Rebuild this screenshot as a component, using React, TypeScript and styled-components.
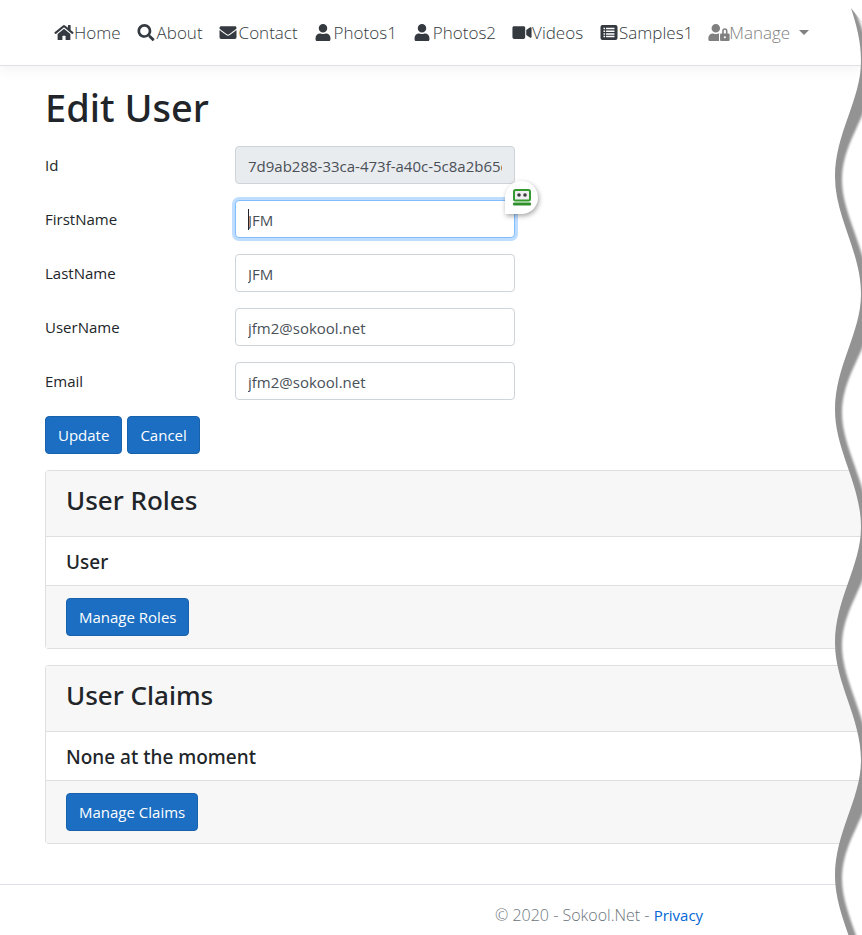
import React from 'react';
import styled, { createGlobalStyle, css } from 'styled-components';
import {
  FaHome,
  FaSearch,
  FaEnvelope,
  FaUser,
  FaVideo,
  FaUserLock,
} from 'react-icons/fa';

const GlobalStyle = createGlobalStyle`
  *, *::before, *::after { box-sizing: border-box; }
  body {
    margin: 0;
    background: #fff;
    color: #212529;
    font-family: 'Segoe UI', 'Open Sans', 'Noto Sans', sans-serif;
    font-size: 15px;
    line-height: 24px;
  }
`;

const headingFont = "'Segoe UI', 'Noto Sans', 'Open Sans', sans-serif";

const Page = styled.div`
  position: relative;
  overflow: hidden;
`;

const Navbar = styled.header`
  display: flex;
  align-items: center;
  height: 66px;
  padding-left: 53px;
  border-bottom: 1px solid #dee2e6;
  box-shadow: 0 4px 12px rgba(0, 0, 0, 0.05);
`;

const NavList = styled.nav`
  display: flex;
  align-items: center;
  gap: 15px;
`;

const NavLink = styled.a<{ $muted?: boolean }>`
  display: flex;
  align-items: center;
  color: ${(p) => (p.$muted ? '#808080' : '#343a40')};
  font-size: 17px;
  font-weight: 300;
  text-decoration: none;
  white-space: nowrap;
`;

const IconSlot = styled.span`
  display: flex;
  justify-content: center;
  width: 21px;

  svg {
    flex: none;
    width: 22px;
    height: 17px;
  }
`;

const Caret = styled.span`
  margin-left: 9px;
  border-top: 5px solid currentColor;
  border-left: 5px solid transparent;
  border-right: 5px solid transparent;
`;

const Main = styled.main`
  padding: 17px 0 0 45px;
`;

const Title = styled.h1`
  margin: 0 0 15px;
  font-family: ${headingFont};
  font-size: 38px;
  font-weight: 500;
  line-height: 48px;
`;

const FieldRow = styled.div`
  display: grid;
  grid-template-columns: 190px 280px;
  align-items: center;
  margin-bottom: 16px;
`;

const FieldLabel = styled.label`
  font-size: 15px;
`;

const FieldBox = styled.div`
  position: relative;
`;

const TextInput = styled.input<{ $active?: boolean }>`
  display: block;
  width: 100%;
  height: 38px;
  padding: 8px 12px 6px;
  border: 1px solid #ced4da;
  border-radius: 4px;
  background: #fff;
  color: #495057;
  font: inherit;
  outline: none;

  &:read-only { background: #e9ecef; }

  ${(p) =>
    p.$active &&
    css`
      border-color: #80bdff;
      box-shadow: 0 0 0 3px #bfdeff;
      caret-color: transparent;
    `}
`;

const TextCursor = styled.span`
  position: absolute;
  left: 13px;
  top: 9px;
  width: 1px;
  height: 21px;
  background: #212529;
`;

const FillBadge = styled.button`
  position: absolute;
  right: -23px;
  top: -19px;
  display: flex;
  align-items: center;
  justify-content: center;
  width: 33px;
  height: 33px;
  padding: 0;
  border: 0;
  border-radius: 17px 17px 17px 0;
  background: #fff;
  box-shadow: 1px 2px 5px rgba(0, 0, 0, 0.35);
`;

const ButtonRow = styled.div`
  display: flex;
  gap: 5px;
  margin-bottom: 16px;
`;

const Button = styled.button`
  height: 38px;
  padding: 0 12px;
  border: 1px solid #1861ac;
  border-radius: 4px;
  background: #1b6ec2;
  color: #fff;
  font: inherit;
`;

const Card = styled.section`
  margin-bottom: 16px;
  border: 1px solid #dfdfdf;
  border-right: 0;
  border-radius: 4px 0 0 4px;
`;

const CardHeader = styled.div`
  padding: 13px 20px 19px;
  border-bottom: 1px solid #dfdfdf;
  background: #f7f7f7;
`;

const CardTitle = styled.h2`
  margin: 0;
  font-family: ${headingFont};
  font-size: 26px;
  font-weight: 500;
  line-height: 33px;
`;

const CardText = styled.h3`
  margin: 0;
  padding: 13px 20px 11px;
  font-family: ${headingFont};
  font-size: 19px;
  font-weight: 500;
  line-height: 24px;
`;

const CardFooter = styled.div`
  padding: 12px 20px;
  border-top: 1px solid #dfdfdf;
  background: #f7f7f7;
`;

const Footer = styled.footer`
  margin-top: 40px;
  padding: 18px 0 8px 495px;
  border-top: 1px solid #dee2e6;
  color: #6c757d;
  font-size: 16px;
  font-weight: 300;
  white-space: nowrap;

  a {
    color: #0366d6;
    font-size: 15px;
    font-weight: 400;
    text-decoration: none;
  }
`;

const TornEdge = styled.svg`
  position: absolute;
  top: 0;
  right: 0;
  width: 30px;
  height: 935px;
  pointer-events: none;
`;

const WAVE = 233;
const WAVES = [0, 1, 2, 3];

const outerEdge =
  'M19 8 C24 24 29 40 29 61 ' +
  WAVES.map((n) => {
    const y = n * WAVE;
    return `C29 ${y + 100} 3 ${y + 133} 3 ${y + 177} C3 ${y + 217} 29 ${y + 252} 29 ${y + 294}`;
  }).join(' ') +
  ' H60 V24 L30 22 Z';

const innerEdge =
  'M22 8 C25 16 36 36 39 76 ' +
  WAVES.map((n) => {
    const y = n * WAVE;
    return `C39 ${y + 116} 10 ${y + 140} 10 ${y + 180} C10 ${y + 217} 39 ${y + 254} 39 ${y + 309}`;
  }).join(' ') +
  ' H80 V0 H22 Z';

function TornPaper() {
  return (
    <TornEdge viewBox="0 0 30 935" aria-hidden="true">
      <defs>
        <filter id="soft" x="-20%" y="-2%" width="140%" height="104%">
          <feGaussianBlur stdDeviation="1.2" />
        </filter>
        <clipPath id="sheet">
          <path d={outerEdge} />
        </clipPath>
      </defs>
      <path d={outerEdge} fill="#939393" />
      <g clipPath="url(#sheet)">
        <path d={innerEdge} fill="#fff" filter="url(#soft)" />
      </g>
    </TornEdge>
  );
}

function RobotIcon() {
  return (
    <svg width="18" height="17" viewBox="0 0 18 17" aria-hidden="true">
      <rect x="1" y="1" width="16" height="10.5" rx="1.5" fill="#f1eef3" stroke="#359b2f" strokeWidth="2" />
      <circle cx="6" cy="6" r="1.8" fill="#3c3c3c" />
      <circle cx="12" cy="6" r="1.8" fill="#3c3c3c" />
      <rect x="0" y="13.5" width="18" height="3" rx="1" fill="#2f8f2a" />
    </svg>
  );
}

function ListIcon() {
  return (
    <svg viewBox="0 0 17 17" aria-hidden="true">
      <rect x="0" y="1" width="17" height="15" rx="2" fill="currentColor" />
      <path
        d="M3 4.5h1.6M3 7.2h1.6M3 9.9h1.6M3 12.6h1.6M5.6 4.5H14M5.6 7.2H14M5.6 9.9H14M5.6 12.6H14"
        stroke="#fff"
        strokeWidth="1.5"
      />
    </svg>
  );
}

const links = [
  { text: 'Home', Icon: FaHome },
  { text: 'About', Icon: FaSearch },
  { text: 'Contact', Icon: FaEnvelope },
  { text: 'Photos1', Icon: FaUser },
  { text: 'Photos2', Icon: FaUser },
  { text: 'Videos', Icon: FaVideo },
  { text: 'Samples1', Icon: ListIcon },
];

const fields = [
  { name: 'Id', value: '7d9ab288-33ca-473f-a40c-5c8a2b65d1f0', readOnly: true },
  { name: 'FirstName', value: 'JFM', active: true },
  { name: 'LastName', value: 'JFM' },
  { name: 'UserName', value: 'jfm2@sokool.net' },
  { name: 'Email', value: 'jfm2@sokool.net' },
];

const cards = [
  { title: 'User Roles', text: 'User', action: 'Manage Roles' },
  { title: 'User Claims', text: 'None at the moment', action: 'Manage Claims' },
];

export default function App() {
  return (
    <Page>
      <GlobalStyle />
      <Navbar>
        <NavList>
          {links.map(({ text, Icon }) => (
            <NavLink href="#" key={text}>
              <IconSlot>
                <Icon />
              </IconSlot>
              {text}
            </NavLink>
          ))}
          <NavLink href="#" $muted>
            <IconSlot>
              <FaUserLock />
            </IconSlot>
            Manage
            <Caret />
          </NavLink>
        </NavList>
      </Navbar>
      <Main>
        <Title>Edit User</Title>
        <form onSubmit={(e) => e.preventDefault()}>
          {fields.map((f) => (
            <FieldRow key={f.name}>
              <FieldLabel htmlFor={f.name}>{f.name}</FieldLabel>
              <FieldBox>
                <TextInput
                  id={f.name}
                  defaultValue={f.value}
                  readOnly={f.readOnly}
                  $active={f.active}
                />
                {f.active && (
                  <>
                    <TextCursor />
                    <FillBadge type="button" aria-label="Fill form">
                      <RobotIcon />
                    </FillBadge>
                  </>
                )}
              </FieldBox>
            </FieldRow>
          ))}
          <ButtonRow>
            <Button type="submit">Update</Button>
            <Button type="button">Cancel</Button>
          </ButtonRow>
        </form>
        {cards.map((c) => (
          <Card key={c.title}>
            <CardHeader>
              <CardTitle>{c.title}</CardTitle>
            </CardHeader>
            <CardText>{c.text}</CardText>
            <CardFooter>
              <Button type="button">{c.action}</Button>
            </CardFooter>
          </Card>
        ))}
      </Main>
      <Footer>
        © 2020 - Sokool.Net - <a href="#">Privacy</a>
      </Footer>
      <TornPaper />
    </Page>
  );
}
